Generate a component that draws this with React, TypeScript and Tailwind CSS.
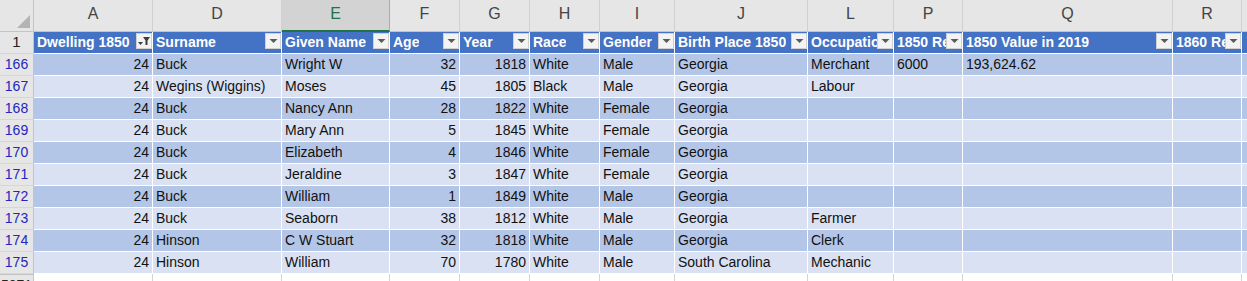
import React from "react";

const letters = ["A", "D", "E", "F", "G", "H", "I", "J", "L", "P", "Q", "R", ""];
const headers = [
  "Dwelling 1850",
  "Surname",
  "Given Name",
  "Age",
  "Year",
  "Race",
  "Gender",
  "Birth Place 1850",
  "Occupation",
  "1850 Real Estate",
  "1850 Value in 2019",
  "1860 Real Estate",
  "",
];

type Row = [string, string, string, string, string, string, string, string, string, string, string];

const rows: { n: string; d: Row }[] = [
  { n: "166", d: ["Buck", "Wright W", "32", "1818", "White", "Male", "Georgia", "Merchant", "6000", "193,624.62", ""] },
  { n: "167", d: ["Wegins (Wiggins)", "Moses", "45", "1805", "Black", "Male", "Georgia", "Labour", "", "", ""] },
  { n: "168", d: ["Buck", "Nancy Ann", "28", "1822", "White", "Female", "Georgia", "", "", "", ""] },
  { n: "169", d: ["Buck", "Mary Ann", "5", "1845", "White", "Female", "Georgia", "", "", "", ""] },
  { n: "170", d: ["Buck", "Elizabeth", "4", "1846", "White", "Female", "Georgia", "", "", "", ""] },
  { n: "171", d: ["Buck", "Jeraldine", "3", "1847", "White", "Female", "Georgia", "", "", "", ""] },
  { n: "172", d: ["Buck", "William", "1", "1849", "White", "Male", "Georgia", "", "", "", ""] },
  { n: "173", d: ["Buck", "Seaborn", "38", "1812", "White", "Male", "Georgia", "Farmer", "", "", ""] },
  { n: "174", d: ["Hinson", "C W Stuart", "32", "1818", "White", "Male", "Georgia", "Clerk", "", "", ""] },
  { n: "175", d: ["Hinson", "William", "70", "1780", "White", "Male", "South Carolina", "Mechanic", "", "", ""] },
];

const rightAligned = [true, false, false, true, true, false, false, false, false, false, false, false, false];

function DropBtn({ filter }: { filter?: boolean }) {
  return (
    <div className="absolute right-0 top-[1px] w-[16px] h-[16px] bg-[#f3f3f3] border border-[#d0d0d0] flex items-center justify-center">
      {filter ? (
        <svg width="14" height="14" viewBox="0 0 14 14">
          <path d="M6 3 H13 L10.5 6.5 V11 H8.5 V6.5 Z" fill="#3c3c3c" />
          <path d="M1 8 H6 L3.5 11 Z" fill="#3c3c3c" />
        </svg>
      ) : (
        <svg width="9" height="6" viewBox="0 0 9 6">
          <path d="M0.5 1 H8.5 L4.5 5 Z" fill="#5a5a5a" />
        </svg>
      )}
    </div>
  );
}

export default function App() {
  const font = { fontFamily: '"Liberation Sans", Arial, sans-serif' };
  return (
    <div className="w-[1247px] h-[281px] overflow-hidden bg-white" style={font}>
      <div className="grid grid-cols-[34px_119px_129px_108px_70px_70px_70px_75px_133px_86px_69px_210px_69px_40px] grid-rows-[32px_22px_repeat(10,22px)_22px] w-[1300px]">
        {/* column letter row */}
        <div className="bg-[#e6e6e6] border-r border-b border-[#c4c4c4] relative">
          <svg className="absolute right-[3px] bottom-[3px]" width="13" height="13" viewBox="0 0 13 13">
            <path d="M13 0 V13 H0 Z" fill="#b4b4b4" />
          </svg>
        </div>
        {letters.map((l, i) =>
          l === "E" ? (
            <div
              key={i}
              className="bg-[#d3d3d3] border-r border-[#ababab] border-b-2 border-b-[#217346] flex items-end justify-center pb-[4px] text-[16px] text-[#217346]"
            >
              {l}
            </div>
          ) : (
            <div
              key={i}
              className="bg-[#e6e6e6] border-r border-b border-r-[#d0d0d0] border-b-[#c4c4c4] flex items-end justify-center pb-[5px] text-[16px] text-[#444444]"
            >
              {l}
            </div>
          )
        )}

        {/* header row */}
        <div className="bg-[#e6e6e6] border-r border-b border-r-[#c4c4c4] border-b-[#d6d6d6] flex items-center justify-center text-[15px] text-[#222222]">
          1
        </div>
        {headers.map((h, i) => (
          <div
            key={i}
            className="relative bg-[#4472c4] border-r border-b border-white text-white font-bold text-[14px] pl-[3px] flex items-center overflow-hidden whitespace-nowrap"
          >
            <span className="overflow-hidden text-clip whitespace-nowrap">{h}</span>
            {i < 12 && <DropBtn filter={i === 0} />}
          </div>
        ))}

        {/* data rows */}
        {rows.map((r, ri) => {
          const dark = ri % 2 === 0;
          const cells = ["24", ...r.d, ""];
          return (
            <React.Fragment key={r.n}>
              <div className="bg-[#e6e6e6] border-r border-b border-r-[#c4c4c4] border-b-[#d6d6d6] flex items-center justify-center text-[14px] text-[#2525c0]">
                {r.n}
              </div>
              {cells.map((c, ci) => (
                <div
                  key={ci}
                  className={
                    (dark ? "bg-[#b4c6e7] " : "bg-[#d9e1f2] ") +
                    "border-r border-b border-white text-[14px] text-[#111111] px-[3px] flex items-center overflow-hidden whitespace-nowrap " +
                    (rightAligned[ci] ? "justify-end" : "justify-start")
                  }
                >
                  {c}
                </div>
              ))}
            </React.Fragment>
          );
        })}

        {/* partial bottom row */}
        <div className="bg-[#e6e6e6] border-r border-t border-r-[#c4c4c4] border-t-[#c4c4c4] flex items-start justify-center text-[14px] text-[#222222]">
          5871
        </div>
        {letters.map((_, i) => (
          <div key={i} className="bg-white border-r border-[#d4d4d4]" />
        ))}
      </div>
    </div>
  );
}
